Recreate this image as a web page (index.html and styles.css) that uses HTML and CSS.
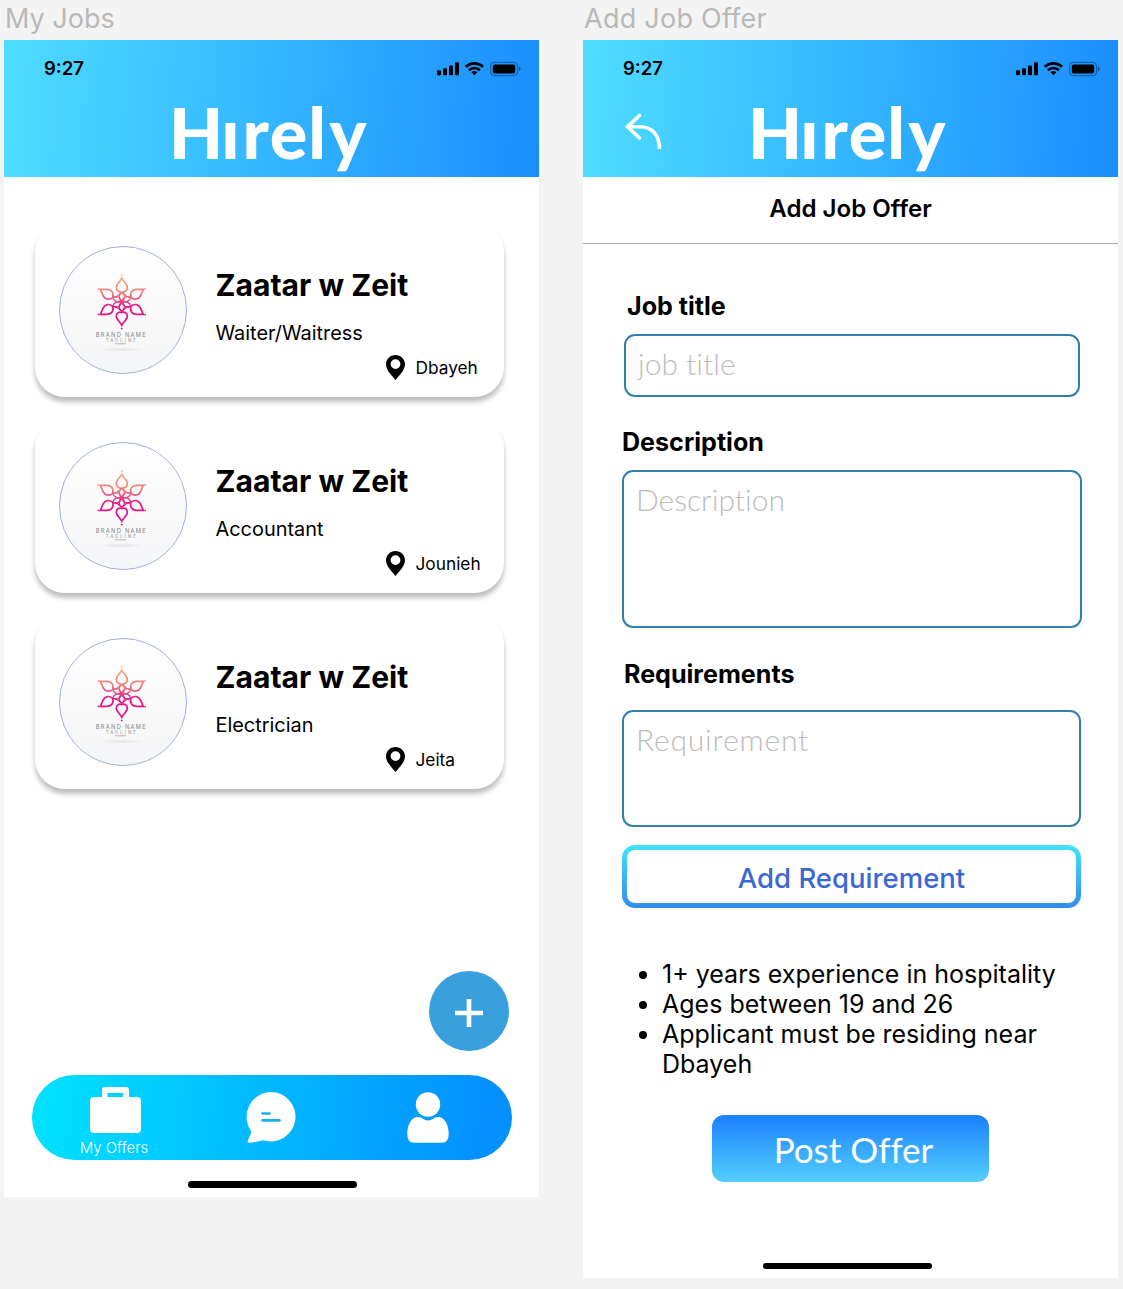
FILE: index.html
```html
<!DOCTYPE html>
<html lang="en">
<head>
<meta charset="utf-8">
<title>Hirely</title>
<link rel="stylesheet" href="styles.css">
</head>
<body>
<svg width="0" height="0" class="defs" aria-hidden="true">
  <defs>
    <linearGradient id="bloom" gradientUnits="userSpaceOnUse" x1="0" y1="-27" x2="0" y2="27">
      <stop offset="0" stop-color="#f5b183"/>
      <stop offset=".35" stop-color="#ee7a78"/>
      <stop offset=".6" stop-color="#e5148a"/>
      <stop offset="1" stop-color="#e8108a"/>
    </linearGradient>
    <radialGradient id="shade">
      <stop offset="0" stop-color="#000" stop-opacity=".08"/>
      <stop offset="1" stop-color="#000" stop-opacity="0"/>
    </radialGradient>
    <symbol id="status" viewBox="0 0 84 16">
      <rect x="0" y="9.3" width="4" height="5" rx="1"/>
      <rect x="6" y="7.2" width="4" height="7.1" rx="1"/>
      <rect x="12" y="4.4" width="4" height="9.9" rx="1"/>
      <rect x="18" y="1.2" width="4" height="13.1" rx="1"/>
      <g fill="none" stroke="#000" stroke-width="2.7">
        <path d="M28.7 5.8a12.6 12.6 0 0 1 17.4 0"/>
        <path d="M31.9 9.2a8 8 0 0 1 11 0"/>
      </g>
      <path d="M34.4 11.3a4.4 4.4 0 0 1 6 0l-3 3z"/>
      <rect x="53.6" y="1.3" width="27" height="13.4" rx="3.8" fill="none" stroke="#000" stroke-opacity=".4"/>
      <rect x="55.8" y="3.6" width="22.4" height="9" rx="1.8"/>
      <path d="M82 5.6v4.6c2-.8 2-3.8 0-4.6z" fill-opacity=".45"/>
    </symbol>
    <symbol id="pin" viewBox="0 0 19 25">
      <path fill-rule="evenodd" d="M9.5 0C4.200 0 0 4.100 0 9.300 0 15.600 6.600 21.200 9.500 25 12.400 21.200 19 15.600 19 9.300 19 4.100 14.800 0 9.500 0zM9.500 4.200a4.900 4.900 0 1 1 0 9.800 4.900 4.900 0 0 1 0-9.800z"/>
    </symbol>
    <symbol id="brand" viewBox="-63 -63 126 126">
      <g transform="translate(-1.200 -8.200)" fill="none" stroke="url(#bloom)" stroke-width="1.700">
        <path d="M0-23.500C-1.200-20.500-5.500-18-5.500-14.500-5.500-11.500-3.300-9.400 0-9.400S5.500-11.500 5.500-14.500C5.500-18 1.200-20.500 0-23.500z"/>
        <path d="M0 23.500C-1.200 20.500-5.500 18-5.500 14.500-5.500 11.500-3 9.400 0 10.800 3 9.400 5.500 11.500 5.500 14.500 5.500 18 1.200 20.500 0 23.500z"/>
        <path d="M-21.500-12.500h6.500c5 0 7 3.500 6 8-3.500 3-8 2-9.600-1.500z"/>
        <path d="M21.500-12.500h-6.500c-5 0-7 3.500-6 8 3.500 3 8 2 9.600-1.500z"/>
        <path d="M-21.500 12.500h6.500c5 0 7-3.500 6-8-3.500-3-8-2-9.600 1.500z"/>
        <path d="M21.500 12.500h-6.500c-5 0-7-3.500-6-8 3.500-3 8-2 9.600 1.500z"/>
        <g stroke-width="1.300">
          <path d="M0-9.400C-3.800-6.500-3.300-3 0 0 3.300-3 3.800-6.500 0-9.400zM0 9.400C-3.800 6.500-3.300 3 0 0 3.300 3 3.800 6.500 0 9.400z"/>
          <path d="M-9-4.500C-4-6.500-1-4 0 0-4 1-8-.5-9-4.500zM9-4.500C4-6.500 1-4 0 0 4 1 8-.5 9-4.500zM-9 4.500C-4 6.500-1 4 0 0-4-1-8 .5-9 4.500zM9 4.500C4 6.500 1 4 0 0 4-1 8 .5 9 4.500z"/>
          <path d="M-9-4.500-4.800-5.500 0-9.400 4.800-5.500 9-4.500M-9 4.500-4.800 5.500 0 9.400 4.800 5.500 9 4.500"/>
        </g>
        <path d="M-.3-26.700h.6M-.3 26.700h.6M23.200-12.800h.4M-23.600-12.800h.4M23.200 12.800h.4M-23.600 12.800h.4" stroke-linecap="round" stroke-width="1.500"/>
      </g>
      <text x="-2.200" y="27" text-anchor="middle" font-size="5.800" textLength="50" fill="#858585">BRAND NAME</text>
      <text x="-2.200" y="32.300" text-anchor="middle" font-size="4.400" textLength="30" fill="#959595">TAGLINE</text>
      <path d="M-8 33.800h11" stroke="#999" stroke-width=".7"/>
      <ellipse cx="-2" cy="39.500" rx="24" ry="2.500" fill="url(#shade)"/>
    </symbol>
  </defs>
</svg>

<main class="canvas">
  <section class="frame">
    <h2 class="frame-name jobs-name">My Jobs</h2>
    <div class="phone phone-jobs">
      <header class="top">
        <div class="status"><span class="time">9:27</span><svg width="84" height="16"><use href="#status"/></svg></div>
        <div class="wordmark" aria-label="Hirely">H<span class="i">ı</span><span class="r">r</span><span class="e">e</span><span class="l">l</span><span class="y">y</span></div>
      </header>
      <div class="cards">
        <article class="card">
          <svg class="avatar"><use href="#brand"/></svg>
          <div class="info">
            <h3>Zaatar w Zeit</h3>
            <p class="role">Waiter/Waitress</p>
            <p class="place"><svg width="19" height="25"><use href="#pin"/></svg><span>Dbayeh</span></p>
          </div>
        </article>
        <article class="card">
          <svg class="avatar"><use href="#brand"/></svg>
          <div class="info">
            <h3>Zaatar w Zeit</h3>
            <p class="role">Accountant</p>
            <p class="place"><svg width="19" height="25"><use href="#pin"/></svg><span>Jounieh</span></p>
          </div>
        </article>
        <article class="card">
          <svg class="avatar"><use href="#brand"/></svg>
          <div class="info">
            <h3>Zaatar w Zeit</h3>
            <p class="role">Electrician</p>
            <p class="place"><svg width="19" height="25"><use href="#pin"/></svg><span>Jeita</span></p>
          </div>
        </article>
      </div>
      <button class="fab" aria-label="Add"><svg width="28" height="28" viewBox="0 0 28 28"><path d="M14 0v28M0 14h28" stroke="#fff" stroke-width="4.600"/></svg></button>
      <nav class="tabs">
        <a class="tab offers">
          <svg width="51" height="46" viewBox="0 0 51 46" fill="#fff"><path fill-rule="evenodd" d="M15 0h21q3 0 3 3v7h8q4 0 4 4v28q0 4-4 4H4q-4 0-4-4V14q0-4 4-4h8V3q0-3 3-3zM17.500 6v4H33V6z"/></svg>
          <span>My Offers</span>
        </a>
        <a class="tab chat">
          <svg width="50" height="51" viewBox="0 0 50 51"><path fill="#fff" d="M25 0a24.700 24.700 0 1 1-7.500 48.300C13 49 6 51 3 50.700c-2.500-.2-1-2.200 0-4.700 1.200-3 3-5.500 1.800-7.500A24.700 24.700 0 0 1 25 0z"/><path d="M16.500 21.500h7M16.500 28.300h17" stroke="#13b2f2" stroke-width="2.700" stroke-linecap="round"/></svg>
        </a>
        <a class="tab person">
          <svg width="42" height="51" viewBox="0 0 42 51" fill="#fff"><circle cx="21" cy="12.500" r="12.200"/><path d="M10 25q3-.5 5.500 1.500 5.500 4 11 0Q29 24.500 32 25c6 .7 9.700 8.500 9.700 17q0 8.700-7 8.700H7.300q-7 0-7-8.700C.3 33.500 4 25.700 10 25z"/></svg>
        </a>
      </nav>
      <div class="home-bar"></div>
    </div>
  </section>

  <section class="frame">
    <h2 class="frame-name offer-name">Add Job Offer</h2>
    <div class="phone phone-offer">
      <header class="top">
        <div class="status"><span class="time">9:27</span><svg width="84" height="16"><use href="#status"/></svg></div>
        <div class="wordmark" aria-label="Hirely">H<span class="i">ı</span><span class="r">r</span><span class="e">e</span><span class="l">l</span><span class="y">y</span></div>
        <svg class="back" width="38" height="37" viewBox="0 0 38 37" fill="none" stroke="#fff" stroke-width="3.600"><path d="M14.500 2.500 2.500 13.700l12 11.300" stroke-linecap="round"/><path d="M3 13.700h12C27 13.700 34.500 22 34.500 36"/></svg>
      </header>
      <h1 class="screen-title">Add Job Offer</h1>
      <form class="form">
        <label class="label l-title">Job title</label>
        <div class="field f-title"><span>job title</span></div>
        <label class="label l-desc">Description</label>
        <div class="field f-desc"><span>Description</span></div>
        <label class="label l-req">Requirements</label>
        <div class="field f-req"><span>Requirement</span></div>
        <button type="button" class="add"><span>Add Requirement</span></button>
        <ul class="reqs">
          <li>1+ years experience in hospitality</li>
          <li>Ages between 19 and 26</li>
          <li>Applicant must be residing near Dbayeh</li>
        </ul>
        <button type="button" class="post"><span>Post Offer</span></button>
      </form>
      <div class="home-bar"></div>
    </div>
  </section>
</main>
</body>
</html>
```
FILE: styles.css
```css
* { box-sizing: border-box; }
body {
  margin: 0;
  background: #f4f4f4;
  color: #000;
  font-family: Inter, "Liberation Sans", sans-serif;
}
h1, h2, h3, p, ul { margin: 0; padding: 0; }
button { border: 0; padding: 0; font-family: inherit; }
svg { display: block; }
.defs { position: absolute; }

.canvas {
  display: flex;
  gap: 44px;
  width: 1123px;
  height: 1289px;
  padding-left: 4px;
  overflow: hidden;
}
.frame { width: 535px; }
.frame-name {
  height: 40px;
  padding-left: 1px;
  color: #b9b9b9;
  font-size: 27px;
  font-weight: 400;
  line-height: 38px;
  white-space: nowrap;
}
.offer-name { letter-spacing: .250px; }
.phone {
  display: flex;
  flex-direction: column;
  width: 535px;
  background: #fff;
}
.phone-jobs { height: 1157px; }
.phone-offer { height: 1238px; }

.top {
  position: relative;
  flex: none;
  height: 137px;
  background: linear-gradient(93deg, #4edcff 1%, #1a8fff 99%);
}
.status {
  display: flex;
  justify-content: space-between;
  padding: 18px 18px 0 40px;
  height: 57px;
}
.status svg { margin-top: 3px; }
.time { font-size: 18.500px; font-weight: 600; line-height: 21px; }
.wordmark {
  height: 70px;
  padding-left: 165px;
  color: #fff;
  font: 900 70px/70px Lato, sans-serif;
  white-space: nowrap;
}
.wordmark .i { margin-left: -2px; }
.wordmark .r { margin-left: 3px; }
.wordmark .e { margin-left: 1px; }
.wordmark .l { margin-left: 1px; }
.wordmark .y { margin-left: 3px; }
.back { position: absolute; left: 42px; top: 73px; }

.cards {
  display: flex;
  flex-direction: column;
  gap: 21px;
  padding: 45px 35px 0 31px;
}
.card {
  display: flex;
  height: 175px;
  padding: 24px 0 0 24px;
  border-radius: 30px;
  background: #fff;
  box-shadow: 0 5px 5px rgba(0, 0, 0, .26);
}
.avatar {
  flex: none;
  width: 128px;
  height: 128px;
  border: 1px solid #a3b1d8;
  border-radius: 50%;
  background: linear-gradient(#fff, #fafafa 45%, #f5f6f8);
}
.info { padding-left: 28.500px; flex: 1; white-space: nowrap; }
.info h3 { margin-top: 20px; font-size: 30.100px; font-weight: 700; line-height: 38px; }
.role { margin-top: 16px; font-size: 19.900px; line-height: 26px; }
.place {
  display: flex;
  align-items: center;
  gap: 11px;
  padding-left: 170px;
  margin-top: 9px;
  font-size: 17.300px;
  line-height: 25px;
}

.fab {
  display: flex;
  align-items: center;
  justify-content: center;
  align-self: flex-end;
  width: 80px;
  height: 80px;
  margin: 182px 30px 0 0;
  padding-top: 4px;
  border-radius: 50%;
  background: #39a0dd;
}
.tabs {
  display: grid;
  grid-template-columns: 164px 150px 164px;
  width: 480px;
  height: 85px;
  margin: 24px 0 0 28px;
  border-radius: 43px;
  background: linear-gradient(96deg, #00e1ff 2%, #0490ff 94%);
}
.tab { display: flex; flex-direction: column; align-items: center; }
.offers { padding-top: 12px; color: #fff; }
.offers svg { margin-left: 3px; }
.offers span { margin-top: 6px; font-size: 14.900px; font-weight: 300; line-height: 18px; }
.chat { padding-top: 17px; }
.person { padding-top: 17px; }
.home-bar { flex: none; width: 169px; height: 6.500px; border-radius: 4px; background: #000; }
.phone-jobs .home-bar { margin: 21px 0 0 184px; }
.phone-offer .home-bar { margin: auto 0 9px 180px; }

.screen-title {
  height: 67px;
  border-bottom: 1px solid #a9a9a9;
  font-size: 24.100px;
  font-weight: 600;
  line-height: 63px;
  text-align: center;
}
.form { display: flex; flex-direction: column; align-items: flex-start; padding-left: 39px; }
.label { font-size: 25.100px; font-weight: 700; line-height: 30px; }
.l-title { margin: 47px 0 0 5px; }
.l-desc { margin-top: 30px; }
.l-req { margin: 31px 0 0 2px; }
.field {
  border: 2px solid #2f80ae;
  border-radius: 11px;
  color: #bdbdbd;
  font: 300 30px/36px Lato, sans-serif;
  font-variant-ligatures: none;
  white-space: nowrap;
}
.f-title { width: 456px; height: 63px; margin: 13px 0 0 2px; padding: 9px 12px; }
.f-desc { width: 460px; height: 158px; margin-top: 13px; padding: 9px 12px; }
.f-req { width: 459px; height: 117px; margin-top: 21px; padding: 9px 12px; letter-spacing: .800px; }
.add {
  width: 459px;
  height: 63px;
  margin-top: 18px;
  padding-top: 3px;
  border: 5px solid transparent;
  border-radius: 13px;
  background: linear-gradient(#fff, #fff) padding-box, linear-gradient(#42e4fb, #348ce9) border-box;
  color: #3b68d4;
  font-size: 27.500px;
  font-weight: 500;
}
.reqs {
  width: 440px;
  margin-top: 51px;
  padding-left: 40px;
  font-size: 25px;
  line-height: 30px;
}
.post {
  width: 277px;
  height: 67px;
  margin: 36px 0 0 90px;
  padding-left: 6px;
  border-radius: 12px;
  background: linear-gradient(#1a80ff, #55cffc);
  color: #fff;
  font: 400 35px/69px Lato, sans-serif;
  font-variant-ligatures: none;
}
```
